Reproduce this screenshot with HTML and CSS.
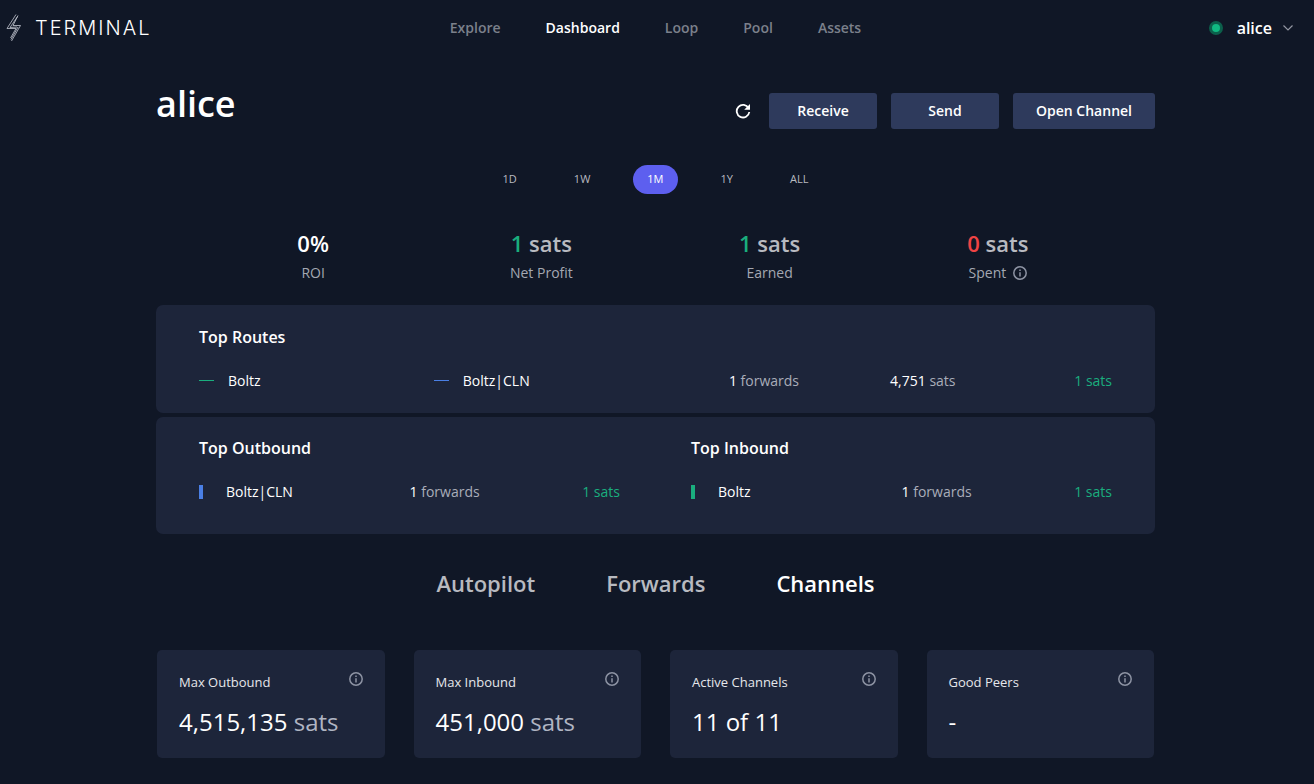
FILE: index.html
```html
<!DOCTYPE html>
<html lang="en">
<head>
<meta charset="utf-8">
<meta name="viewport" content="width=device-width, initial-scale=1">
<title>Terminal</title>
<link rel="stylesheet" href="styles.css">
</head>
<body>
<svg class="defs" aria-hidden="true">
  <symbol id="info" viewBox="0 0 14 14">
    <circle cx="7" cy="7" r="6.200" fill="none" stroke="currentColor" stroke-width="1.500"/>
    <path d="M7 6.200v4.300M7 3.500v1.500" fill="none" stroke="currentColor" stroke-width="1.500"/>
  </symbol>
</svg>
<header class="topbar">
  <a class="logo" href="#">
    <svg class="logo-mark" viewBox="0 0 16 28" aria-hidden="true">
      <path d="M10 .5 1 14.500H10L4.500 24M11.500 2.500 4 13.500M4 13.500 11 13M12 1.500 7 11.500H14.500L5.500 27M12 13 5 25.500"/>
    </svg>
    <span>TERMINAL</span>
  </a>
  <nav class="nav">
    <a href="#">Explore</a>
    <a class="active" href="#">Dashboard</a>
    <a href="#">Loop</a>
    <a href="#">Pool</a>
    <a href="#">Assets</a>
  </nav>
  <button class="account" type="button">
    <span class="status"></span>
    <span>alice</span>
    <svg class="chevron" viewBox="0 0 10 6" aria-hidden="true"><path d="M.5.5 5 5 9.500.5"/></svg>
  </button>
</header>
<main class="page">
  <div class="heading">
    <h1>alice</h1>
    <div class="actions">
      <button class="refresh" type="button" aria-label="Refresh">
        <svg viewBox="0 0 16 16" aria-hidden="true"><path d="M13.600 5.200A6.300 6.300 0 1 0 14.300 9" fill="none" stroke="currentColor" stroke-width="1.800"/><path d="M15 1v5.800H9.200z" fill="currentColor"/></svg>
      </button>
      <button class="btn" type="button">Receive</button>
      <button class="btn" type="button">Send</button>
      <button class="btn" type="button">Open Channel</button>
    </div>
  </div>
  <div class="ranges">
    <button type="button">1D</button>
    <button type="button">1W</button>
    <button class="active" type="button">1M</button>
    <button type="button">1Y</button>
    <button type="button">ALL</button>
  </div>
  <section class="stats">
    <div><p class="stat-value">0%</p><p class="stat-label">ROI</p></div>
    <div><p class="stat-value muted"><span class="green">1</span> sats</p><p class="stat-label">Net Profit</p></div>
    <div><p class="stat-value muted"><span class="green">1</span> sats</p><p class="stat-label">Earned</p></div>
    <div><p class="stat-value muted"><span class="red">0</span> sats</p><p class="stat-label">Spent <svg class="info"><use href="#info"/></svg></p></div>
  </section>
  <section class="panel routes">
    <h2>Top Routes</h2>
    <div class="route">
      <span class="hop"><i class="dash dash-green"></i>Boltz</span>
      <span class="hop"><i class="dash dash-blue"></i>Boltz|CLN</span>
      <span class="amount"><b>1</b> forwards</span>
      <span class="amount"><b>4,751</b> sats</span>
      <span class="amount green">1 sats</span>
    </div>
  </section>
  <section class="panel peers">
    <div>
      <h2>Top Outbound</h2>
      <div class="peer">
        <span class="name"><i class="bar bar-blue"></i>Boltz|CLN</span>
        <span class="amount"><b>1</b> forwards</span>
        <span class="amount green">1 sats</span>
      </div>
    </div>
    <div>
      <h2>Top Inbound</h2>
      <div class="peer">
        <span class="name"><i class="bar bar-green"></i>Boltz</span>
        <span class="amount"><b>1</b> forwards</span>
        <span class="amount green">1 sats</span>
      </div>
    </div>
  </section>
  <nav class="tabs">
    <a href="#">Autopilot</a>
    <a href="#">Forwards</a>
    <a class="active" href="#">Channels</a>
  </nav>
  <section class="cards">
    <article class="card">
      <div class="card-top"><h3>Max Outbound</h3><svg class="info"><use href="#info"/></svg></div>
      <p class="card-value">4,515,135 <span>sats</span></p>
    </article>
    <article class="card">
      <div class="card-top"><h3>Max Inbound</h3><svg class="info"><use href="#info"/></svg></div>
      <p class="card-value">451,000 <span>sats</span></p>
    </article>
    <article class="card">
      <div class="card-top"><h3>Active Channels</h3><svg class="info"><use href="#info"/></svg></div>
      <p class="card-value">11 of 11</p>
    </article>
    <article class="card">
      <div class="card-top"><h3>Good Peers</h3><svg class="info"><use href="#info"/></svg></div>
      <p class="card-value">-</p>
    </article>
  </section>
</main>
</body>
</html>
```
FILE: styles.css
```css
* { box-sizing: border-box; }
body {
  margin: 0;
  padding-right: 3px;
  background: #101726;
  color: #fff;
  font: 14px/20px "Open Sans", sans-serif;
}
h1, h2, h3, p { margin: 0; font-weight: 600; }
a { color: inherit; text-decoration: none; }
button { border: 0; background: none; color: inherit; font: inherit; padding: 0; cursor: pointer; }
.defs { position: absolute; width: 0; height: 0; }
.green { color: #1aae7e; }
.red { color: #ef4444; }
.info { width: 14px; height: 14px; color: #8d93a3; }

.topbar {
  display: grid;
  grid-template-columns: 1fr auto 1fr;
  align-items: center;
  height: 56px;
  padding: 0 6px;
}
.logo { display: flex; align-items: center; gap: 13px; font: 300 20px/28px Inter, sans-serif; letter-spacing: 2px; }
.logo-mark { width: 16px; height: 28px; fill: none; stroke: #c3c7d0; stroke-width: 0.8; }
.nav { display: flex; gap: 45px; font-weight: 600; color: #7b808b; }
.nav .active { color: #fff; }
.account { justify-self: end; display: flex; align-items: center; margin-right: 12px; font-weight: 600; font-size: 16px; }
.status { width: 14px; height: 14px; margin-right: 14px; border: 3px solid #0c5f4b; border-radius: 50%; background: #10b981; }
.chevron { width: 10px; height: 6px; margin-left: 11px; fill: none; stroke: #9296a1; stroke-width: 1.2; }

.page { padding: 23px 156px 26px; }
.heading { display: flex; justify-content: space-between; align-items: center; }
h1 { font-size: 36px; line-height: 48px; }
.actions { display: flex; align-items: center; gap: 14px; padding-top: 14px; }
.refresh { display: flex; width: 16px; height: 16px; margin-right: 4px; }
.btn { min-width: 108px; padding: 8px 23px; border-radius: 3px; background: #2e3a5c; font-weight: 600; }

.ranges { display: flex; justify-content: center; gap: 29px; margin-top: 36px; font-size: 11px; line-height: 15px; color: #b8bac0; }
.ranges button { padding: 6px 14px 8px; border-radius: 15px; }
.ranges .active { background: #5d5fef; color: #fff; }

.stats { display: grid; grid-template-columns: repeat(4, 1fr); padding: 0 43px; margin-top: 34px; text-align: center; }
.stat-value { font-size: 22px; line-height: 30px; }
.muted { color: #b8bac0; }
.stat-label { display: flex; justify-content: center; align-items: center; gap: 7px; margin-top: 5px; font-weight: 400; color: #a4a8b2; }

.panel { padding: 20px 43px 32px; border-radius: 7px; background: #1d253a; }
.panel h2 { font-size: 16px; line-height: 22px; }
.routes { margin-top: 22px; padding: 21px 43px 22px; }
.route { display: grid; grid-template-columns: 8fr 8fr 5fr 5fr 5fr; gap: 26px; margin-top: 23px; }
.hop, .name { display: flex; align-items: center; }
.dash { width: 15px; height: 1px; margin: 0 14px 1px 0; }
.dash-green, .bar-green { background: #1aae7e; }
.dash-blue, .bar-blue { background: #4a7fe5; }
.amount { text-align: right; color: #a9adb9; }
.amount b { color: #fff; font-weight: 400; }
.amount.green { color: #1aae7e; }
.peers { display: grid; grid-template-columns: 1fr 1fr; gap: 71px; margin-top: 4px; }
.peer { display: grid; grid-template-columns: repeat(3, 1fr); margin-top: 23px; }
.bar { width: 4px; height: 14px; margin-right: 23px; }

.tabs { display: flex; justify-content: center; gap: 71px; margin-top: 34px; font-size: 22px; line-height: 30px; font-weight: 600; color: #b8bac0; }
.tabs .active { color: #fff; }
.cards { display: grid; grid-template-columns: repeat(4, 1fr); gap: 29px; margin-top: 52px; padding: 0 1px; }
.card { padding: 22px 22px 20px; border-radius: 5px; background: #1d253a; }
.card-top { display: flex; justify-content: space-between; align-items: flex-start; }
.card h3 { font-size: 13px; line-height: 20px; font-weight: 400; color: #e6e7eb; }
.card-value { margin-top: 14px; font-size: 24px; line-height: 32px; font-weight: 400; }
.card-value span { color: #b0b5c3; }
```
